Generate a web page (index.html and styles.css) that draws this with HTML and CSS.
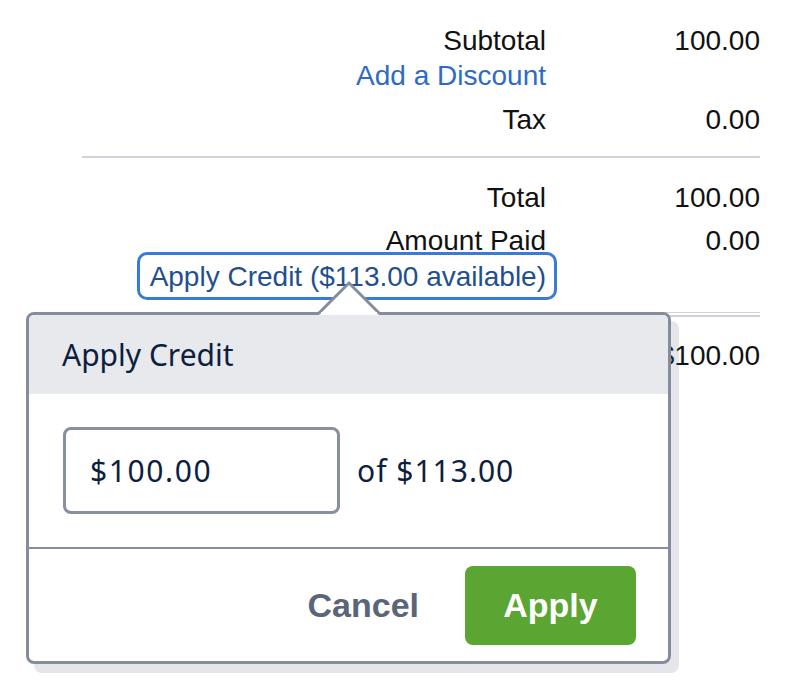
FILE: index.html
```html
<!DOCTYPE html>
<html lang="en">
<head>
<meta charset="utf-8">
<title>Apply Credit</title>
<link rel="stylesheet" href="styles.css">
</head>
<body>
<div class="summary">
  <div class="row r-subtotal"><span class="label">Subtotal</span><span class="value">100.00</span></div>
  <div class="row r-discount"><a class="label link" href="#">Add a Discount</a><span class="value"></span></div>
  <div class="row r-tax"><span class="label">Tax</span><span class="value">0.00</span></div>
  <div class="rule"></div>
  <div class="row r-total"><span class="label">Total</span><span class="value">100.00</span></div>
  <div class="row r-paid"><span class="label">Amount Paid</span><span class="value">0.00</span></div>
  <div class="row r-credit"><button class="credit-btn" type="button">Apply Credit ($113.00 available)</button></div>
  <div class="double-rule"></div>
  <div class="row r-balance"><span class="label">Balance Due</span><span class="value">$100.00</span></div>
</div>

<div class="popover">
  <svg class="caret" width="66" height="36" viewBox="0 0 66 36" aria-hidden="true">
    <polygon points="3,36 33,4 63,36" fill="#ffffff"/>
    <polyline points="3,34 33,4 63,34" fill="none" stroke="#858d9d" stroke-width="3" stroke-linejoin="miter"/>
    <rect x="5" y="33" width="56" height="3" fill="#ffffff"/>
  </svg>
  <div class="pop-head">Apply Credit</div>
  <div class="pop-body">
    <div class="amount-input">$100.00</div>
    <span class="of-total">of $113.00</span>
  </div>
  <div class="pop-foot">
    <button class="btn-cancel" type="button">Cancel</button>
    <button class="btn-apply" type="button">Apply</button>
  </div>
</div>
</body>
</html>
```

FILE: styles.css
```css
html {
  background: #ffffff;
}

html, body {
  margin: 0;
  padding: 0;
}

body {
  font-family: "Liberation Sans", Arial, sans-serif;
  color: #111111;
}

.summary {
  margin-left: 82px;
  width: 678px;
  padding-top: 24px;
}

.row {
  display: grid;
  grid-template-columns: 1fr 214px;
  font-size: 28px;
  line-height: 34px;
}

.label,
.value {
  text-align: right;
}

.link {
  color: #2e6bc6;
  text-decoration: none;
}

.r-discount { margin-top: 1px; }
.r-tax { margin-top: 10px; }

.rule {
  margin-top: 19px;
  height: 2px;
  background: #cfd2d8;
}

.r-total { margin-top: 23px; }
.r-paid { margin-top: 9px; }

.r-credit {
  margin-top: -6px;
}

.credit-btn {
  justify-self: end;
  margin-right: -11px;
  box-sizing: border-box;
  height: 48px;
  padding: 2px 8px 0 10px;
  border: 3px solid #3a7bd6;
  border-radius: 10px;
  background: transparent;
  font-family: "Liberation Sans", Arial, sans-serif;
  font-size: 28px;
  line-height: 40px;
  color: #1f4f8f;
  white-space: nowrap;
}

.double-rule {
  margin-top: 12px;
  height: 2px;
  border-top: 1px solid #cfd2d8;
  border-bottom: 2px solid #cfd2d8;
}

.r-balance { margin-top: 22px; }

/* Popover overlay */
.popover {
  position: absolute;
  left: 26px;
  top: 312px;
  width: 645px;
  height: 352px;
  box-sizing: border-box;
  border: 3px solid #858d9d;
  border-radius: 8px;
  background: #ffffff;
  box-shadow: 8px 9px 0 rgba(120, 128, 150, 0.2);
  display: flex;
  flex-direction: column;
  font-family: "Noto Sans", "Open Sans", sans-serif;
  color: #0e1e3f;
}

.caret {
  position: absolute;
  left: 287px;
  top: -36px;
  display: block;
}

.pop-head {
  height: 79px;
  background: #e8e9ed;
  border-radius: 5px 5px 0 0;
  display: flex;
  align-items: center;
  padding-left: 33px;
  font-size: 30px;
}

.pop-body {
  display: flex;
  align-items: center;
  padding: 33px 0 33px 34px;
  border-bottom: 2px solid #878fa0;
}

.amount-input {
  box-sizing: border-box;
  width: 277px;
  height: 87px;
  border: 3px solid #878fa0;
  border-radius: 8px;
  display: flex;
  align-items: center;
  padding-left: 24px;
  font-size: 30px;
  letter-spacing: 1.6px;
}

.of-total {
  margin-left: 17px;
  font-size: 30px;
  letter-spacing: 1px;
}

.pop-foot {
  flex: 1;
  display: flex;
  align-items: center;
  justify-content: flex-end;
  padding-right: 32px;
}

.btn-cancel {
  border: none;
  background: transparent;
  padding: 0;
  margin-right: 46px;
  font-family: "Liberation Sans", Arial, sans-serif;
  font-weight: bold;
  font-size: 34px;
  color: #5a6579;
}

.btn-apply {
  width: 171px;
  height: 79px;
  border: none;
  border-radius: 8px;
  background: #5ba532;
  color: #ffffff;
  font-family: "Liberation Sans", Arial, sans-serif;
  font-weight: bold;
  font-size: 34px;
  padding: 0;
}
```
